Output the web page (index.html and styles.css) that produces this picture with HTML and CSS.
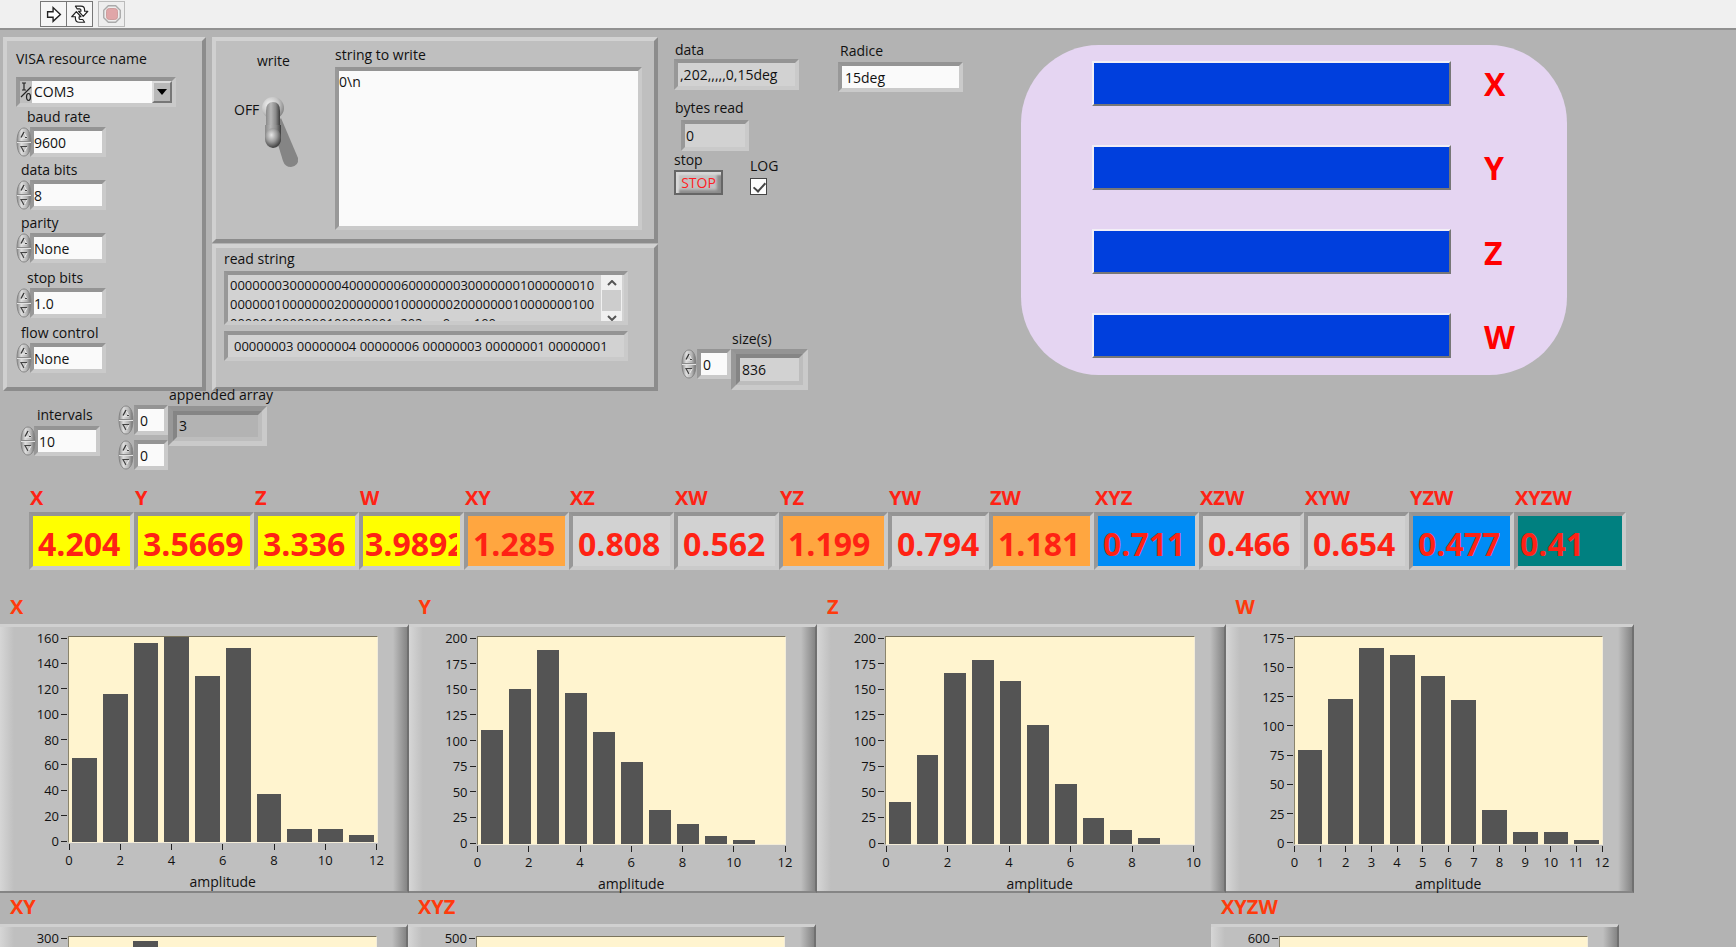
FILE: index.html
```html
<!DOCTYPE html>
<html lang="en">
<head>
<meta charset="utf-8">
<title>Front panel</title>
<link rel="stylesheet" href="styles.css">
</head>
<body>
<svg class="defs" aria-hidden="true">
  <defs>
    <linearGradient id="metal" x1="0" x2="1" y1="0" y2="0">
      <stop offset="0" stop-color="#8c8c8c"/><stop offset=".3" stop-color="#dedede"/><stop offset=".7" stop-color="#b4b4b4"/><stop offset="1" stop-color="#6e6e6e"/>
    </linearGradient>
    <linearGradient id="lever" x1="0" x2="1" y1="0" y2="0">
      <stop offset="0" stop-color="#8a8a8a"/><stop offset=".35" stop-color="#b8b8b8"/><stop offset=".7" stop-color="#8a8a8a"/><stop offset="1" stop-color="#3c3c3c"/>
    </linearGradient>
    <radialGradient id="base" cx=".35" cy=".35" r=".7">
      <stop offset="0" stop-color="#f4f4f4"/><stop offset=".6" stop-color="#c4c4c4"/><stop offset="1" stop-color="#858585"/>
    </radialGradient>
    <radialGradient id="ball" cx=".4" cy=".35" r=".7">
      <stop offset="0" stop-color="#e6e6e6"/><stop offset=".5" stop-color="#9a9a9a"/><stop offset="1" stop-color="#333"/>
    </radialGradient>
    <symbol id="spin-up" viewBox="0 0 16 15">
      <path d="M1 15C1 6 4 1 8 1s7 5 7 14z" fill="url(#metal)" stroke="#868686"/>
      <path d="M1 14.500h14" stroke="#8a8a8a"/>
      <path d="M5 11h6L8 5.500" fill="none" stroke="#eee"/>
      <path d="M5 10.500L8 5" fill="none" stroke="#333" stroke-width="1.300"/><path d="M9 10.500h2" stroke="#444"/>
    </symbol>
    <symbol id="spin-down" viewBox="0 0 16 15">
      <path d="M1 0C1 9 4 14 8 14s7-5 7-14z" fill="url(#metal)" stroke="#868686"/>
      <path d="M1 .5h14" stroke="#e2e2e2"/>
      <path d="M11 5L8 10.500" stroke="#eee"/>
      <path d="M11 4.500H5L8 10" fill="none" stroke="#444" stroke-width="1.200"/>
    </symbol>
  </defs>
</svg>

<header class="toolbar">
  <div class="toolbar-group">
    <button class="tool" aria-label="Run"><svg viewBox="0 0 24 24"><path d="M5 9.500h6V5l8 7.500-8 7.500v-4.500H5z" fill="#fff" stroke="#222" stroke-width="1.500"/></svg></button>
    <button class="tool" aria-label="Run continuously"><svg viewBox="0 0 24 24"><g fill="#fff" stroke="#222" stroke-width="1.300" stroke-linejoin="round"><path d="M7 3.500h6q4 0 4 4v1.500h3.500l-5 5.500-5-5.500H13V8q0-1.500-1.500-1.500H9z"/><path d="M17 21h-6q-4 0-4-4v-2H3l5-5.500 5 5.500h-2v1.500q0 1.500 1.500 1.500H15z"/></g></svg></button>
  </div>
  <button class="tool tool--off" aria-label="Abort"><svg viewBox="0 0 24 24"><path d="M8 3h8l5 5v8l-5 5H8l-5-5V8z" fill="#eee" stroke="#aaa" stroke-width="1.500"/><rect x="6" y="6" width="12" height="12" rx="3" fill="#e0a6a8" stroke="#c99"/></svg></button>
</header>

<main class="front">
  <section class="top">
    <div class="panel port">
      <label class="label" for="visa">VISA resource name</label>
      <div class="combo sunken">
        <svg class="combo-io" viewBox="0 0 12 22"><g fill="none" stroke="#222" stroke-width="1.200"><path d="M2 2h4M4 2v7M2 9h4M11 6L1 16"/><ellipse cx="8.500" cy="16" rx="2" ry="3.500"/></g></svg>
        <select id="visa"><option>COM3</option></select>
        <span class="combo-arrow"><svg viewBox="0 0 10 6"><path d="M0 0h10L5 6z"/></svg></span>
      </div>
      <div class="field field--in2">
        <label class="label" for="baud">baud rate</label>
        <div class="numeric"><span class="spin"><button aria-label="Increase baud rate"><svg><use href="#spin-up"/></svg></button><button aria-label="Decrease baud rate"><svg><use href="#spin-down"/></svg></button></span><input class="sunken" id="baud" value="9600"></div>
      </div>
      <div class="field field--in1">
        <label class="label" for="bits">data bits</label>
        <div class="numeric"><span class="spin"><button aria-label="Increase data bits"><svg><use href="#spin-up"/></svg></button><button aria-label="Decrease data bits"><svg><use href="#spin-down"/></svg></button></span><input class="sunken" id="bits" value="8"></div>
      </div>
      <div class="field field--in1">
        <label class="label" for="parity">parity</label>
        <div class="numeric"><span class="spin"><button aria-label="Next parity"><svg><use href="#spin-up"/></svg></button><button aria-label="Previous parity"><svg><use href="#spin-down"/></svg></button></span><input class="sunken" id="parity" value="None"></div>
      </div>
      <div class="field field--in2 field--loose">
        <label class="label" for="stopbits">stop bits</label>
        <div class="numeric"><span class="spin"><button aria-label="Next stop bits"><svg><use href="#spin-up"/></svg></button><button aria-label="Previous stop bits"><svg><use href="#spin-down"/></svg></button></span><input class="sunken" id="stopbits" value="1.0"></div>
      </div>
      <div class="field field--in1 field--loose">
        <label class="label" for="flow">flow control</label>
        <div class="numeric"><span class="spin"><button aria-label="Next flow control"><svg><use href="#spin-up"/></svg></button><button aria-label="Previous flow control"><svg><use href="#spin-down"/></svg></button></span><input class="sunken" id="flow" value="None"></div>
      </div>
    </div>

    <div class="serial">
      <div class="panel writer">
        <div class="switch">
          <span class="label" id="write-label">write</span>
          <div class="switch-row">
            <span class="label">OFF</span>
            <button role="switch" aria-checked="false" aria-labelledby="write-label"><svg viewBox="0 0 40 74"><path d="M20 22L37 62q1 8-7 9-6 0-8-6L12 32z" fill="#858585"/><circle cx="12" cy="12" r="11" fill="url(#base)"/><path d="M5 15q0-9 7-9t7 9v26H5z" fill="url(#lever)"/><path d="M4 29v14q1 9 8 9t8-9V29z" fill="url(#lever)"/><ellipse cx="12" cy="42" rx="8" ry="10" fill="url(#ball)"/></svg></button>
          </div>
        </div>
        <div class="write-text">
          <label class="label" for="towrite">string to write</label>
          <textarea class="sunken" id="towrite">0\n</textarea>
        </div>
      </div>
      <div class="panel reader">
        <label class="label" for="read">read string</label>
        <div class="read-box sunken">
          <textarea id="read" readonly>0000000300000004000000060000000300000001000000010
0000001000000020000000100000002000000010000000100
0000010000000100000001,,202,,,,,,0,,,,,,,100</textarea>
          <div class="scroll" aria-hidden="true"><svg viewBox="0 0 10 6"><path d="M1 5l4-4 4 4" fill="none" stroke="#555" stroke-width="2"/></svg><span></span><svg viewBox="0 0 10 6"><path d="M1 1l4 4 4-4" fill="none" stroke="#555" stroke-width="2"/></svg></div>
        </div>
        <input class="sunken indicator" aria-label="split string" readonly value="00000003 00000004 00000006 00000003 00000001 00000001">
      </div>
    </div>

    <div class="status">
      <label class="label" for="data">data</label>
      <input class="sunken indicator" id="data" readonly value=",202,,,,,0,15deg">
      <label class="label status-gap" for="bytes">bytes read</label>
      <input class="sunken indicator bytes" id="bytes" readonly value="0">
      <div class="stop-row">
        <div class="stop-cell"><span class="label" id="stop-label">stop</span><button class="stop" aria-describedby="stop-label">STOP</button></div>
        <div class="log-cell"><label class="label" for="log">LOG</label><input type="checkbox" id="log" checked></div>
      </div>
      <div class="sizes">
        <div class="numeric numeric--index"><span class="spin"><button aria-label="Increase index"><svg><use href="#spin-up"/></svg></button><button aria-label="Decrease index"><svg><use href="#spin-down"/></svg></button></span><input class="sunken" aria-label="size index" value="0"></div>
        <div class="array-cell"><label class="label" for="size">size(s)</label><div class="array-frame sunken"><input class="indicator" id="size" readonly value="836"></div></div>
      </div>
    </div>

    <div class="radice">
      <label class="label" for="radice">Radice</label>
      <input class="sunken" id="radice" value="15deg">
    </div>

    <div class="gauges">
      <div class="gauge"><div class="gauge-bar"></div><span>X</span></div>
      <div class="gauge"><div class="gauge-bar"></div><span>Y</span></div>
      <div class="gauge"><div class="gauge-bar"></div><span>Z</span></div>
      <div class="gauge"><div class="gauge-bar"></div><span>W</span></div>
    </div>
  </section>

  <section class="below">
    <div class="intervals">
      <label class="label" for="intervals">intervals</label>
      <div class="numeric"><span class="spin"><button aria-label="Increase intervals"><svg><use href="#spin-up"/></svg></button><button aria-label="Decrease intervals"><svg><use href="#spin-down"/></svg></button></span><input class="sunken" id="intervals" value="10"></div>
    </div>
    <div class="indices">
      <div class="numeric numeric--index"><span class="spin"><button aria-label="Increase row"><svg><use href="#spin-up"/></svg></button><button aria-label="Decrease row"><svg><use href="#spin-down"/></svg></button></span><input class="sunken" aria-label="row" value="0"></div>
      <div class="numeric numeric--index"><span class="spin"><button aria-label="Increase column"><svg><use href="#spin-up"/></svg></button><button aria-label="Decrease column"><svg><use href="#spin-down"/></svg></button></span><input class="sunken" aria-label="column" value="0"></div>
    </div>
    <div class="array-cell array-cell--wide"><label class="label" for="appended">appended array</label><div class="array-frame sunken"><input id="appended" readonly value="3"></div></div>
  </section>

  <section class="readouts">
    <div class="readout yellow"><label for="r1">X</label><input id="r1" class="sunken" readonly value="4.204"></div>
    <div class="readout yellow"><label for="r2">Y</label><input id="r2" class="sunken" readonly value="3.5669"></div>
    <div class="readout yellow"><label for="r3">Z</label><input id="r3" class="sunken" readonly value="3.336"></div>
    <div class="readout yellow tight"><label for="r4">W</label><input id="r4" class="sunken" readonly value="3.9892"></div>
    <div class="readout orange"><label for="r5">XY</label><input id="r5" class="sunken" readonly value="1.285"></div>
    <div class="readout"><label for="r6">XZ</label><input id="r6" class="sunken" readonly value="0.808"></div>
    <div class="readout"><label for="r7">XW</label><input id="r7" class="sunken" readonly value="0.562"></div>
    <div class="readout orange"><label for="r8">YZ</label><input id="r8" class="sunken" readonly value="1.199"></div>
    <div class="readout"><label for="r9">YW</label><input id="r9" class="sunken" readonly value="0.794"></div>
    <div class="readout orange"><label for="r10">ZW</label><input id="r10" class="sunken" readonly value="1.181"></div>
    <div class="readout blue"><label for="r11">XYZ</label><input id="r11" class="sunken" readonly value="0.711"></div>
    <div class="readout"><label for="r12">XZW</label><input id="r12" class="sunken" readonly value="0.466"></div>
    <div class="readout"><label for="r13">XYW</label><input id="r13" class="sunken" readonly value="0.654"></div>
    <div class="readout blue"><label for="r14">YZW</label><input id="r14" class="sunken" readonly value="0.477"></div>
    <div class="readout teal tight"><label for="r15">XYZW</label><input id="r15" class="sunken" readonly value="0.41"></div>
  </section>

  <section class="charts">
    <figure>
      <figcaption>X</figcaption>
      <div class="chart chart--short">
        <div class="y-axis"><span>160</span><span>140</span><span>120</span><span>100</span><span>80</span><span>60</span><span>40</span><span>20</span><span>0</span></div>
        <div class="plot">
          <i style="height:40.8%"></i><i style="height:72%"></i><i style="height:97.2%"></i><i style="height:100%"></i><i style="height:80.9%"></i><i style="height:94.8%"></i><i style="height:23.3%"></i><i style="height:6.3%"></i><i style="height:6.3%"></i><i style="height:3.2%"></i>
        </div>
        <div class="x-axis"><span>0</span><span>2</span><span>4</span><span>6</span><span>8</span><span>10</span><span>12</span></div>
        <div class="x-title">amplitude</div>
      </div>
    </figure>
    <figure>
      <figcaption>Y</figcaption>
      <div class="chart">
        <div class="y-axis"><span>200</span><span>175</span><span>150</span><span>125</span><span>100</span><span>75</span><span>50</span><span>25</span><span>0</span></div>
        <div class="plot plot--y">
          <i style="height:54.9%"></i><i style="height:74.7%"></i><i style="height:93.9%"></i><i style="height:72.8%"></i><i style="height:54.2%"></i><i style="height:39.4%"></i><i style="height:16.6%"></i><i style="height:9.9%"></i><i style="height:3.8%"></i><i style="height:2.1%"></i>
        </div>
        <div class="x-axis"><span>0</span><span>2</span><span>4</span><span>6</span><span>8</span><span>10</span><span>12</span></div>
        <div class="x-title">amplitude</div>
      </div>
    </figure>
    <figure>
      <figcaption>Z</figcaption>
      <div class="chart">
        <div class="y-axis"><span>200</span><span>175</span><span>150</span><span>125</span><span>100</span><span>75</span><span>50</span><span>25</span><span>0</span></div>
        <div class="plot plot--z">
          <i style="height:20.5%"></i><i style="height:42.9%"></i><i style="height:82.4%"></i><i style="height:89.1%"></i><i style="height:78.9%"></i><i style="height:57.4%"></i><i style="height:29%"></i><i style="height:12.8%"></i><i style="height:6.9%"></i><i style="height:2.7%"></i>
        </div>
        <div class="x-axis"><span>0</span><span>2</span><span>4</span><span>6</span><span>8</span><span>10</span></div>
        <div class="x-title">amplitude</div>
      </div>
    </figure>
    <figure>
      <figcaption>W</figcaption>
      <div class="chart">
        <div class="y-axis"><span>175</span><span>150</span><span>125</span><span>100</span><span>75</span><span>50</span><span>25</span><span>0</span></div>
        <div class="plot">
          <i style="height:45.3%"></i><i style="height:69.9%"></i><i style="height:94.9%"></i><i style="height:91.5%"></i><i style="height:81.3%"></i><i style="height:69.4%"></i><i style="height:16.5%"></i><i style="height:5.6%"></i><i style="height:5.6%"></i><i style="height:2.1%"></i>
        </div>
        <div class="x-axis"><span>0</span><span>1</span><span>2</span><span>3</span><span>4</span><span>5</span><span>6</span><span>7</span><span>8</span><span>9</span><span>10</span><span>11</span><span>12</span></div>
        <div class="x-title">amplitude</div>
      </div>
    </figure>
  </section>

  <section class="charts charts--second">
    <figure>
      <figcaption>XY</figcaption>
      <div class="chart">
        <div class="y-axis"><span>300</span></div>
        <div class="plot"><i style="height:0%"></i><i style="height:0%"></i><i style="height:98%"></i><i style="height:0%"></i><i style="height:0%"></i><i style="height:0%"></i><i style="height:0%"></i><i style="height:0%"></i><i style="height:0%"></i><i style="height:0%"></i></div>
      </div>
    </figure>
    <figure>
      <figcaption>XYZ</figcaption>
      <div class="chart">
        <div class="y-axis"><span>500</span></div>
        <div class="plot"></div>
      </div>
    </figure>
    <figure class="last">
      <figcaption>XYZW</figcaption>
      <div class="chart">
        <div class="y-axis"><span>600</span></div>
        <div class="plot"></div>
      </div>
    </figure>
  </section>
</main>
</body>
</html>
```
FILE: styles.css
```css
* { box-sizing: border-box; }
body {
  margin: 0;
  height: 100vh;
  overflow: hidden;
  display: flex;
  flex-direction: column;
  background: #b3b3b3;
  color: #111;
  font: 14px/18px "Open Sans", "Noto Sans", sans-serif;
}
button, input, select, textarea {
  margin: 0;
  padding: 0;
  border: 0;
  border-radius: 0;
  background: none;
  color: inherit;
  font: 14px/18px "Open Sans", "Noto Sans", sans-serif;
  min-width: 0;
}
svg { display: block; }
.defs { position: absolute; width: 0; height: 0; }
.label { font-size: 14px; line-height: 18px; white-space: nowrap; }

/* toolbar */
.toolbar {
  flex: none;
  display: flex;
  gap: 5px;
  height: 30px;
  padding: 1px 0 0 40px;
  background: #f0f0f0;
  border-bottom: 2px solid #919191;
}
.toolbar-group { display: flex; }
.tool { width: 27px; height: 26px; border: 1px solid #777; background: #f6f6f6; }
.tool + .tool { border-left: 0; width: 26px; }
.tool svg { width: 22px; height: 22px; margin: auto; }
.tool--off { border-color: #bbb; background: #eee; }

/* raised panels and recessed boxes */
.panel {
  background: #bfbfbf;
  border: 4px solid;
  border-color: #d2d2d2 #8c8c8c #8c8c8c #d0d0d0;
}
.sunken {
  border: 4px solid;
  border-color: #949494 #cacaca #cacaca #989898;
  background: #fafafa;
}
.indicator, .sunken.indicator { background: #d2d2d2; }

.front { flex: 1; min-height: 0; overflow: hidden; }
.top { display: flex; align-items: stretch; padding: 7px 0 0 3px; height: 361px; }

/* serial port settings */
.port { width: 203px; padding: 9px 9px 0; flex: none; }
.combo { display: flex; width: 160px; height: 30px; margin: 9px 0 1px; position: relative; background: #fafafa; }
.port > .label { display: block; }
.combo-io { width: 12px; height: 22px; background: #bfbfbf; flex: none; }
.combo select { flex: 1; appearance: none; padding-left: 2px; }
.combo-arrow {
  position: absolute; right: 0; top: 0; bottom: 0; width: 20px;
  display: flex; align-items: center; justify-content: center;
  background: #b8b8b8; border: 2px solid; border-color: #ddd #777 #777 #ddd;
  pointer-events: none;
}
.combo-arrow svg { width: 10px; height: 6px; }
.field { display: flex; flex-direction: column; gap: 1px; margin-bottom: 4px; }
.field--loose { margin-top: 6px; }
.field--in1 .label { padding-left: 5px; }
.field--in2 .label { padding-left: 11px; }
.numeric { display: flex; align-items: center; width: 90px; height: 30px; }
.numeric input { flex: 1; width: 0; height: 30px; }
.spin { display: flex; flex-direction: column; width: 14px; flex: none; }
.spin button { height: 15px; }
.spin svg { width: 16px; height: 15px; position: relative; z-index: 1; }
.numeric--index { width: 50px; height: 34px; }
.numeric--index input { padding-left: 2px; }
.numeric--index .spin { width: 16px; }

/* write and read strings */
.serial { flex: none; display: flex; flex-direction: column; gap: 1px; width: 446px; margin-left: 6px; }
.writer { display: flex; height: 206px; }
.switch { width: 119px; padding-top: 11px; }
.switch > .label { display: block; padding-left: 41px; }
.switch-row { display: flex; gap: 2px; padding: 26px 0 0 18px; }
.switch-row .label { padding-top: 5px; }
.switch-row svg { width: 40px; height: 74px; }
.write-text { flex: 1; display: flex; flex-direction: column; gap: 3px; padding: 5px 12px 9px 0; }
.write-text textarea { flex: 1; resize: none; padding: 2px 0; }
.reader { flex: 1; display: flex; flex-direction: column; padding: 2px 26px 0 8px; }
.read-box { display: flex; height: 54px; margin: 3px 0 6px; background: #d2d2d2; }
.read-box textarea { flex: 1; resize: none; overflow: hidden; padding: 1px 0 0 2px; font-size: 13px; line-height: 19px; white-space: pre; }
.scroll { width: 21px; margin-right: 2px; display: flex; flex-direction: column; align-items: center; justify-content: space-between; background: #f0f0f0; padding-top: 5px; }
.scroll svg { width: 10px; height: 6px; }
.scroll span { width: 19px; height: 21px; background: #cdcdcd; }
.reader > input { height: 30px; padding-left: 6px; font-size: 13px; }

/* status column */
.status { flex: none; width: 150px; margin-left: 16px; display: flex; flex-direction: column; padding-top: 4px; }
.status > .label { padding-left: 1px; }
#data { width: 125px; height: 31px; padding-left: 2px; }
.status-gap { padding-top: 9px; }
.bytes { width: 68px; height: 31px; margin: 3px 0 0 7px; padding-left: 1px; }
.stop-row { display: flex; gap: 27px; }
.stop-cell, .log-cell { display: flex; flex-direction: column; }
.stop-cell .label { padding-bottom: 1px; }
.log-cell { padding-top: 6px; }
.stop {
  width: 49px; height: 25px; color: #ff1c24;
  border: 2px solid #666; background: #c2c2c2;
  box-shadow: inset 3px 3px 2px #d8d8d8, inset -4px -3px 3px #8b8b8b;
}
#log { appearance: none; width: 17px; height: 17px; margin-top: 3px; border: 1px solid #444; background: #fdfdfd; position: relative; }
#log:checked::after { content: ""; position: absolute; left: 5px; top: 1px; width: 5px; height: 10px; border: solid #444; border-width: 0 2px 2px 0; rotate: 42deg; }
.sizes { display: flex; align-items: flex-end; margin: auto 0 1px 7px; }
.sizes .numeric { margin-bottom: 9px; }
.array-cell { display: flex; flex-direction: column; gap: 1px; }
.array-cell .label { padding-left: 1px; }
.array-frame { display: flex; width: 77px; height: 41px; border-width: 5px; background: #b3b3b3; }
.array-frame input { width: 100%; border: 4px solid; border-color: #858585 #bdbdbd #bdbdbd #858585; padding-left: 2px; }

.radice { flex: none; width: 125px; margin-left: 14px; padding-top: 5px; display: flex; flex-direction: column; gap: 2px; }
.radice input { height: 30px; padding-left: 3px; }
.radice .label { padding-left: 2px; }

/* gauges */
.gauges {
  flex: 1;
  margin: 8px 169px 16px 58px;
  padding: 15px 0 16px 71px;
  display: flex; flex-direction: column; justify-content: space-between;
  background: #e5d5f2;
  border-radius: 78px;
}
.gauge { display: flex; align-items: center; gap: 33px; height: 46px; }
.gauge-bar { flex: 1; height: 45px; background: #003fdd; border: 2px solid; border-color: #f2eef6 #777 #777 #f2eef6; }
.gauge span { width: 83px; padding-top: 2px; font-size: 32px; line-height: 46px; font-weight: 700; color: #f00; }

/* intervals and appended array */
.below { display: flex; align-items: flex-start; height: 98px; margin-top: -5px; padding-left: 20px; }
.intervals { display: flex; flex-direction: column; gap: 2px; width: 98px; padding-top: 20px; }
.intervals .label { padding-left: 17px; }
.intervals .numeric { width: 80px; }
.intervals input { padding-left: 1px; }
.indices { display: flex; flex-direction: column; gap: 1px; padding-top: 17px; }
.array-cell--wide { gap: 2px; }
.array-cell--wide .array-frame { width: 99px; height: 40px; }

/* readouts */
.readouts {
  display: grid;
  grid-template-columns: 105fr 120fr repeat(5, 105fr) 109fr 101fr repeat(5, 105fr) 112fr;
  padding: 0 110px 0 29px;
}
.readout { display: flex; flex-direction: column; min-width: 0; }
.readout label { padding-left: 1px; color: #ff2214; font-size: 20px; line-height: 28px; font-weight: 700; }
.readout input { width: 100%; height: 58px; padding: 4px 5px 0 5px; background: #d2d2d2; color: #ff2214; font-size: 32px; line-height: 46px; font-weight: 700; }
.readout.yellow input { background: #ff0; }
.readout.orange input { background: #ffa640; }
.readout.blue input { background: #008cf5; }
.readout.teal input { background: #008080; }
.readout.tight input { padding: 4px 3px 0 2px; }

/* histograms */
.charts { display: grid; grid-template-columns: repeat(4, 1fr); padding: 23px 102px 0 0; }
figure { margin: 0; min-width: 0; }
figcaption { padding-left: 10px; color: #ff3a0c; font-size: 20px; line-height: 28px; height: 31px; font-weight: 700; }
.chart {
  --plot: 209px;
  display: grid;
  grid-template: var(--plot) 30px 20px / 68px 1fr;
  height: 269px;
  padding: 9px 29px 0 0;
  border-top: 3px solid #d0d0d0;
  border-right: 2px solid #707070;
  border-bottom: 2px solid #858585;
  background: linear-gradient(90deg, #d6d6d6, #bfbfbf 14px, #bfbfbf calc(100% - 14px), #858585);
}
.chart--short { --plot: 207px; }
.y-axis { display: flex; flex-direction: column; justify-content: space-between; margin: -7px 0; font-size: 13px; line-height: 18px; }
.y-axis span { display: flex; align-items: center; justify-content: flex-end; gap: 2px; padding-right: 1px; }
.y-axis span::after { content: ""; width: 6px; height: 1px; background: #222; }
.plot {
  display: flex; align-items: flex-end; gap: 6px; padding: 0 3px;
  background: #fff4cf;
  border: 1px solid; border-color: #7b745c #f3ecd8 #f3ecd8 #8a846c;
}
.plot i { flex: 1; background: #545454; }
.plot--y { padding-right: 30px; }
.plot--z { padding-right: 34px; }
.x-axis { grid-column: 2; display: flex; justify-content: space-between; padding: 1px 1px 0; font-size: 13px; line-height: 18px; }
.x-axis span { width: 0; display: flex; flex-direction: column; align-items: center; gap: 1px; }
.x-axis span::before { content: ""; width: 1px; height: 6px; background: #222; }
.x-title { grid-column: 2; text-align: center; }
.charts--second { grid-template-columns: 408fr 408fr 395fr 408fr; padding: 0 117px 0 0; }
.last { grid-column: 4; }
```
